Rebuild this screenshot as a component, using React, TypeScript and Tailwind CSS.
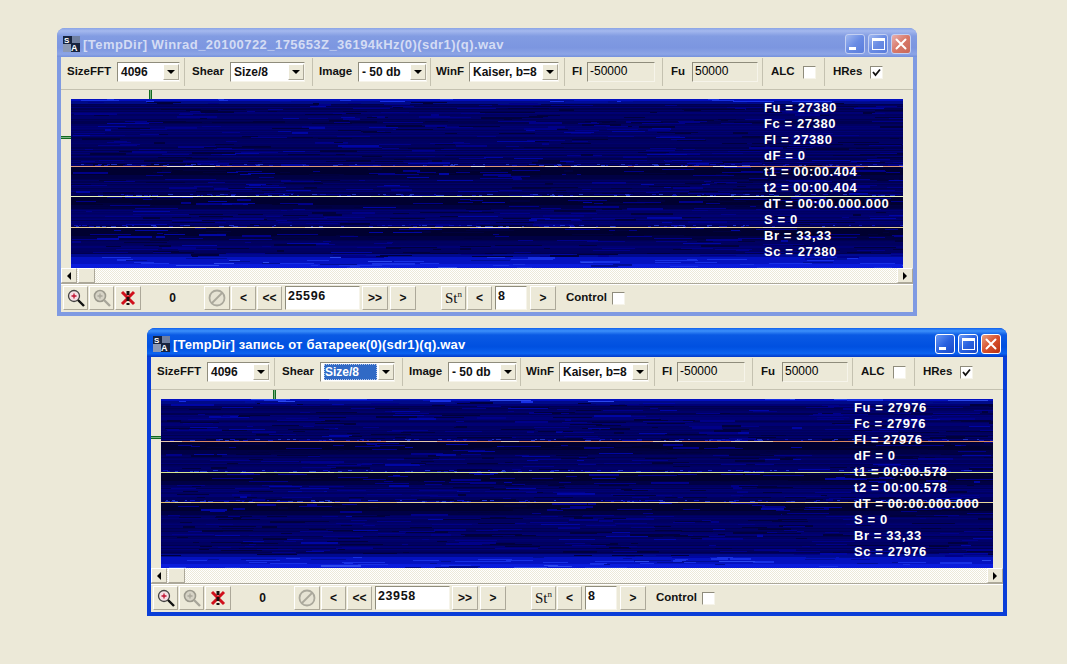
import React, { useMemo } from 'react';
import clsx from 'clsx';

const raised = 'border border-t-white border-l-white border-r-[#aca899] border-b-[#aca899] bg-[#ece9d8]';
const sunken = 'border border-t-[#8f8c7c] border-l-[#8f8c7c] border-r-[#f6f4ea] border-b-[#f6f4ea]';

type Line = { y: number; color: string; alt: string };

interface WindowProps {
  active?: boolean;
  title: string;
  titleClass: string;
  className: string;
  tickClass: string;
  lines: Line[];
  seed: number;
  stats: string[];
  position: string;
  shearFocused?: boolean;
}

const makeRandom = (seed: number) => () => {
  seed = (seed + 0x6d2b79f5) | 0;
  let t = Math.imul(seed ^ (seed >>> 15), 1 | seed);
  t = (t + Math.imul(t ^ (t >>> 7), 61 | t)) ^ t;
  return ((t ^ (t >>> 14)) >>> 0) / 4294967296;
};

const Spectrogram: React.FC<{ seed: number; lines: Line[] }> = ({ seed, lines }) => {
  const W = 832;
  const H = 169;

  const { rows, streaks, segments } = useMemo(() => {
    const rnd = makeRandom(seed);
    const rows: { y: number; fill: string }[] = [];
    const streaks: { x: number; y: number; w: number; h: number; fill: string }[] = [];
    const segments: { x: number; y: number; w: number; fill: string }[] = [];

    for (let y = 0; y < H; y++) {
      let fill = ['#00005e', '#00006a', '#000050', '#000074', '#000062'][Math.floor(rnd() * 5)];
      if (y < 2) fill = '#0410c0';
      else if (y < 5) fill = '#000a88';
      else if (y >= H - 4) fill = '#0a1cdc';
      else if (y >= H - 11) fill = '#0412c0';
      else if (y >= H - 14) fill = '#000a90';
      lines.forEach((l) => {
        if (y > l.y && y < l.y + 13 && y < H - 14) fill = y < l.y + 9 ? '#000030' : '#000044';
      });
      rows.push({ y, fill });
    }

    for (let i = 0; i < 950; i++) {
      const y = Math.floor(rnd() * H);
      const x = Math.floor(rnd() * W);
      const w = 6 + Math.floor(rnd() * 38);
      const bright = y < 3 || y > H - 12;
      const r = rnd();
      let fill = r < 0.45 ? '#00003e' : r < 0.9 ? '#000088' : '#0006a4';
      if (bright) fill = r < 0.5 ? '#1830e4' : r < 0.8 ? '#000c98' : '#2c48ec';
      streaks.push({ x, y, w, h: rnd() < 0.8 ? 1 : 2, fill });
    }

    lines.forEach((l) => {
      // speckle just above the carrier line
      for (let i = 0; i < 90; i++) {
        streaks.push({
          x: Math.floor(rnd() * W),
          y: l.y - 1 - Math.floor(rnd() * 2),
          w: 2 + Math.floor(rnd() * 4),
          h: 1,
          fill: rnd() < 0.5 ? '#1c30c0' : '#0a10b0',
        });
      }
      for (let x = 0; x < W; ) {
        const w = 6 + Math.floor(rnd() * 30);
        segments.push({ x, y: l.y, w, fill: rnd() < 0.72 ? l.color : l.alt });
        x += w;
      }
    });

    return { rows, streaks, segments };
  }, [seed, lines]);

  return (
    <svg width={W} height={H} className="block" shapeRendering="crispEdges">
      {rows.map((r) => (
        <rect key={r.y} x={0} y={r.y} width={W} height={1} fill={r.fill} />
      ))}
      {streaks.map((s, i) => (
        <rect key={i} x={s.x} y={s.y} width={s.w} height={s.h} fill={s.fill} />
      ))}
      {segments.map((s, i) => (
        <rect key={i} x={s.x} y={s.y} width={s.w} height={1} fill={s.fill} />
      ))}
    </svg>
  );
};

const AppIcon = () => (
  <svg width="17" height="16" viewBox="0 0 17 16" className="shrink-0">
    <rect width="17" height="16" fill="#16233f" />
    <rect x="9" y="0" width="8" height="7" fill="#6f7fa0" />
    <rect x="0" y="8" width="8" height="8" fill="#8b98b4" />
    <text x="1" y="7" fontSize="8" fontWeight="700" fontFamily="Liberation Sans" fill="#fff">S</text>
    <text x="8" y="15" fontSize="9" fontWeight="700" fontFamily="Liberation Sans" fill="#fff">A</text>
  </svg>
);

const CaptionButton: React.FC<{ kind: 'min' | 'max' | 'close'; active?: boolean }> = ({ kind, active }) => (
  <div
    className={clsx(
      'flex h-[20px] w-[20px] items-center justify-center rounded-[3px] border',
      active ? 'border-white' : 'border-[#c4d0f2]',
      kind === 'close'
        ? active
          ? 'bg-[linear-gradient(135deg,#e8a080,#d8502c_50%,#b83010)]'
          : 'bg-[linear-gradient(135deg,#e8b0b0,#d87868_50%,#c86858)]'
        : active
          ? 'bg-[linear-gradient(135deg,#6a98f4,#2a62e0_50%,#1a48c8)]'
          : 'bg-[linear-gradient(135deg,#a0b8f0,#6a8ce4_50%,#5a7cdc)]',
    )}
  >
    {kind === 'min' && <span className="mt-[9px] mr-[6px] h-[3px] w-[7px] bg-white" />}
    {kind === 'max' && <span className="h-[12px] w-[13px] border border-t-[3px] border-white" />}
    {kind === 'close' && (
      <svg width="12" height="12" viewBox="0 0 12 12">
        <path d="M1.5 1.5 L10.5 10.5 M10.5 1.5 L1.5 10.5" stroke="#fff" strokeWidth="2" strokeLinecap="round" />
      </svg>
    )}
  </div>
);

const Combo: React.FC<{ value: string; className: string; focused?: boolean }> = ({ value, className, focused }) => (
  <div className={clsx('flex h-[20px] shrink-0 items-center bg-white pl-[3px]', sunken, className)}>
    <span
      className={clsx(
        'flex-1 whitespace-nowrap text-[12px] leading-[14px]',
        focused && 'mr-[1px] border border-dotted border-[#b8c8e8] bg-[#316ac5] text-white',
      )}
    >
      {value}
    </span>
    <div className={clsx('flex h-[16px] w-[16px] shrink-0 items-center justify-center', raised)}>
      <span className="h-0 w-0 border-x-[4px] border-t-[4px] border-x-transparent border-t-black" />
    </div>
  </div>
);

const Check: React.FC<{ checked?: boolean }> = ({ checked }) => (
  <div className={clsx('flex h-[13px] w-[13px] shrink-0 items-center justify-center bg-white', sunken)}>
    {checked && (
      <svg width="9" height="9" viewBox="0 0 9 9">
        <path d="M1 4 L3.5 7 L8 1.5" fill="none" stroke="#111" strokeWidth="1.8" />
      </svg>
    )}
  </div>
);

const Cell: React.FC<{ className: string; children: React.ReactNode }> = ({ className, children }) => (
  <div className={clsx('flex h-[28px] shrink-0 items-center border-r border-[#c4c1b0]', className)}>{children}</div>
);

const ToolButton: React.FC<{ className: string; children: React.ReactNode }> = ({ className, children }) => (
  <div className={clsx('flex h-[24px] shrink-0 items-center justify-center text-[12px]', raised, className)}>
    {children}
  </div>
);

const SpecWindow: React.FC<WindowProps> = ({
  active,
  title,
  titleClass,
  className,
  tickClass,
  lines,
  seed,
  stats,
  position,
  shearFocused,
}) => (
  <div
    className={clsx(
      'absolute flex h-[288px] w-[860px] flex-col rounded-t-[8px] font-["Liberation_Sans",Arial,sans-serif] font-bold text-[#111]',
      active ? 'bg-[#0a3ed8]' : 'bg-[#7f9ae2]',
      className,
    )}
  >
    {/* caption */}
    <div
      className={clsx(
        'flex h-[29px] shrink-0 items-center rounded-t-[8px] px-[6px] pt-[2px]',
        active
          ? 'bg-[linear-gradient(180deg,#1060ec_0%,#3c90fa_10%,#0a5ae4_24%,#0050e0_65%,#0a62f0_88%,#0038c8_100%)]'
          : 'bg-[linear-gradient(180deg,#8aa4e6_0%,#a4b8ee_10%,#829ce2_28%,#7c96e0_68%,#8ca4e6_90%,#7490dc_100%)]',
      )}
    >
      <AppIcon />
      <span
        className={clsx(
          'mt-[2px] ml-[3px] flex-1 truncate text-[13px]',
          active ? 'text-white' : 'text-[#d4dcf4]',
          titleClass,
        )}
      >
        {title}
      </span>
      <div className="flex gap-[3px]">
        <CaptionButton kind="min" active={active} />
        <CaptionButton kind="max" active={active} />
        <CaptionButton kind="close" active={active} />
      </div>
    </div>

    {/* client area */}
    <div className="mx-[4px] flex flex-1 flex-col bg-[#ece9d8] text-[11.5px]">
      <div className="flex h-[33px] shrink-0 items-center border-b border-[#c4c1b0] pb-[2px]">
        <Cell className="w-[124px] pl-[6px]">
          <span className="w-[50px]">SizeFFT</span>
          <Combo value="4096" className="w-[63px]" />
        </Cell>
        <Cell className="w-[128px] pl-[7px]">
          <span className="w-[38px]">Shear</span>
          <Combo value="Size/8" className="w-[75px]" focused={shearFocused} />
        </Cell>
        <Cell className="w-[118px] pl-[6px]">
          <span className="w-[39px]">Image</span>
          <Combo value="- 50 db" className="w-[69px]" />
        </Cell>
        <Cell className="w-[134px] pl-[5px]">
          <span className="w-[33px]">WinF</span>
          <Combo value="Kaiser, b=8" className="w-[90px]" />
        </Cell>
        <Cell className="w-[98px] pl-[7px]">
          <span className="w-[15px]">Fl</span>
          <div className={clsx('h-[20px] w-[68px] pl-[2px] text-[12px] leading-[16px] font-normal text-black', sunken)}>-50000</div>
        </Cell>
        <Cell className="w-[100px] pl-[8px]">
          <span className="w-[21px]">Fu</span>
          <div className={clsx('h-[20px] w-[66px] pl-[2px] text-[12px] leading-[16px] font-normal text-black', sunken)}>50000</div>
        </Cell>
        <Cell className="w-[62px] pl-[8px]">
          <span className="w-[32px]">ALC</span>
          <Check />
        </Cell>
        <div className="flex h-[28px] items-center pl-[8px]">
          <span className="w-[37px]">HRes</span>
          <Check checked />
        </div>
      </div>

      {/* plot */}
      <div className="relative h-[178px] shrink-0 px-[10px] pt-[9px]">
        <span className={clsx('absolute top-0 h-[9px] w-[3px] border-x border-[#126a20] bg-[#78b080]', tickClass)} />
        <span className="absolute top-[46px] left-0 h-[3px] w-[10px] border-y border-[#126a20] bg-[#78b080]" />
        <div className="relative">
          <Spectrogram seed={seed} lines={lines} />
          <div className="absolute top-[1px] left-[693px] text-[13px] leading-[16px] tracking-[0.6px] whitespace-nowrap text-white">
            {stats.map((s) => (
              <div key={s}>{s}</div>
            ))}
          </div>
        </div>
      </div>

      {/* horizontal scroll bar */}
      <div className="flex h-[15px] shrink-0 bg-[repeating-conic-gradient(#ece9d8_0_25%,#ffffff_0_50%)] bg-[length:2px_2px]">
        <div className={clsx('flex w-[16px] items-center justify-center', raised)}>
          <span className="h-0 w-0 border-y-[4px] border-r-[4px] border-y-transparent border-r-black" />
        </div>
        <div className={clsx('ml-[1px] w-[17px]', raised)} />
        <div className="flex-1" />
        <div className={clsx('flex w-[16px] items-center justify-center', raised)}>
          <span className="h-0 w-0 border-y-[4px] border-l-[4px] border-y-transparent border-l-black" />
        </div>
      </div>

      {/* bottom toolbar */}
      <div className="flex flex-1 items-center border-t border-[#aca899] pl-[2px] shadow-[inset_0_1px_0_#ffffff]">
        <ToolButton className="w-[25px]">
          <svg width="20" height="20" viewBox="0 0 20 20">
            <circle cx="8" cy="8" r="5.5" fill="#f4dfe4" stroke="#444" strokeWidth="1.3" />
            <path d="M5.5 8 H10.5 M8 5.5 V10.5" stroke="#c01030" strokeWidth="1.3" />
            <path d="M12 12 L18 18" stroke="#111" strokeWidth="2.4" />
          </svg>
        </ToolButton>
        <ToolButton className="ml-[1px] w-[25px]">
          <svg width="20" height="20" viewBox="0 0 20 20">
            <circle cx="8" cy="8" r="5.5" fill="#d6d3c6" stroke="#9c9a8e" strokeWidth="1.6" />
            <path d="M5.5 8 H10.5 M8 5.5 V10.5" stroke="#aaa89c" strokeWidth="1.3" />
            <path d="M12 12 L18 18" stroke="#a8a69a" strokeWidth="2.4" />
          </svg>
        </ToolButton>
        <ToolButton className="ml-[1px] w-[26px]">
          <svg width="16" height="18" viewBox="0 0 16 18">
            <path d="M2 3 L14 15 M14 3 L2 15" stroke="#d0101c" strokeWidth="3" />
            <path d="M8 2 V16" stroke="#1a1010" strokeWidth="3" strokeDasharray="4 2" />
          </svg>
        </ToolButton>
        <div className="flex h-[24px] w-[63px] shrink-0 items-center justify-center text-[12px]">0</div>
        <ToolButton className="w-[26px]">
          <svg width="20" height="20" viewBox="0 0 20 20">
            <circle cx="10" cy="10" r="7.5" fill="#e6e3d4" stroke="#aaa89c" strokeWidth="1.8" />
            <path d="M5 15 L15 5" stroke="#aaa89c" strokeWidth="1.8" />
          </svg>
        </ToolButton>
        <ToolButton className="ml-[1px] w-[25px]">&lt;</ToolButton>
        <ToolButton className="ml-[1px] w-[25px]">&lt;&lt;</ToolButton>
        <div className={clsx('ml-[3px] h-[24px] w-[75px] shrink-0 bg-white pl-[2px] text-[12.5px] leading-[18px] tracking-[0.6px]', sunken)}>
          {position}
        </div>
        <ToolButton className="ml-[2px] w-[26px]">&gt;&gt;</ToolButton>
        <ToolButton className="ml-[2px] w-[26px]">&gt;</ToolButton>
        <ToolButton className="ml-[25px] w-[25px] font-['Liberation_Serif',serif] text-[15px] font-normal">
          St<sup className="text-[9px]">n</sup>
        </ToolButton>
        <ToolButton className="ml-[1px] w-[25px]">&lt;</ToolButton>
        <div className={clsx('ml-[3px] h-[24px] w-[32px] shrink-0 bg-white pl-[2px] text-[12.5px] leading-[18px]', sunken)}>8</div>
        <ToolButton className="ml-[3px] w-[26px]">&gt;</ToolButton>
        <span className="ml-[10px] w-[46px]">Control</span>
        <Check />
      </div>
    </div>
    <div className="h-[4px] shrink-0" />
  </div>
);

const statsFor = (f: string, t: string) => [
  `Fu = ${f}`,
  `Fc = ${f}`,
  `Fl = ${f}`,
  'dF = 0',
  `t1 = 00:00.${t}`,
  `t2 = 00:00.${t}`,
  'dT = 00:00.000.000',
  'S = 0',
  'Br = 33,33',
  `Sc = ${f}`,
];

const linesA: Line[] = [
  { y: 67, color: '#dc9878', alt: '#f0e0d0' },
  { y: 97, color: '#e8f4b8', alt: '#f8fce8' },
  { y: 128, color: '#e0c890', alt: '#f0e4c0' },
];

const linesB: Line[] = [
  { y: 42, color: '#d88860', alt: '#e8c8a8' },
  { y: 73, color: '#d8e890', alt: '#b8d078' },
  { y: 103, color: '#e0c070', alt: '#e8d898' },
];

export default function App() {
  return (
    <div className="relative h-[664px] w-[1067px] overflow-hidden bg-[#ece9d8]">
      <SpecWindow
        className="top-[28px] left-[57px]"
        tickClass="left-[88px]"
        title="[TempDir] Winrad_20100722_175653Z_36194kHz(0)(sdr1)(q).wav"
        titleClass="tracking-[0.45px]"
        lines={linesA}
        seed={11}
        stats={statsFor('27380', '404')}
        position="25596"
      />
      <SpecWindow
        active
        shearFocused
        className="top-[328px] left-[147px]"
        tickClass="left-[122px]"
        title="[TempDir] запись от батареек(0)(sdr1)(q).wav"
        titleClass="tracking-[0.18px]"
        lines={linesB}
        seed={47}
        stats={statsFor('27976', '578')}
        position="23958"
      />
    </div>
  );
}
